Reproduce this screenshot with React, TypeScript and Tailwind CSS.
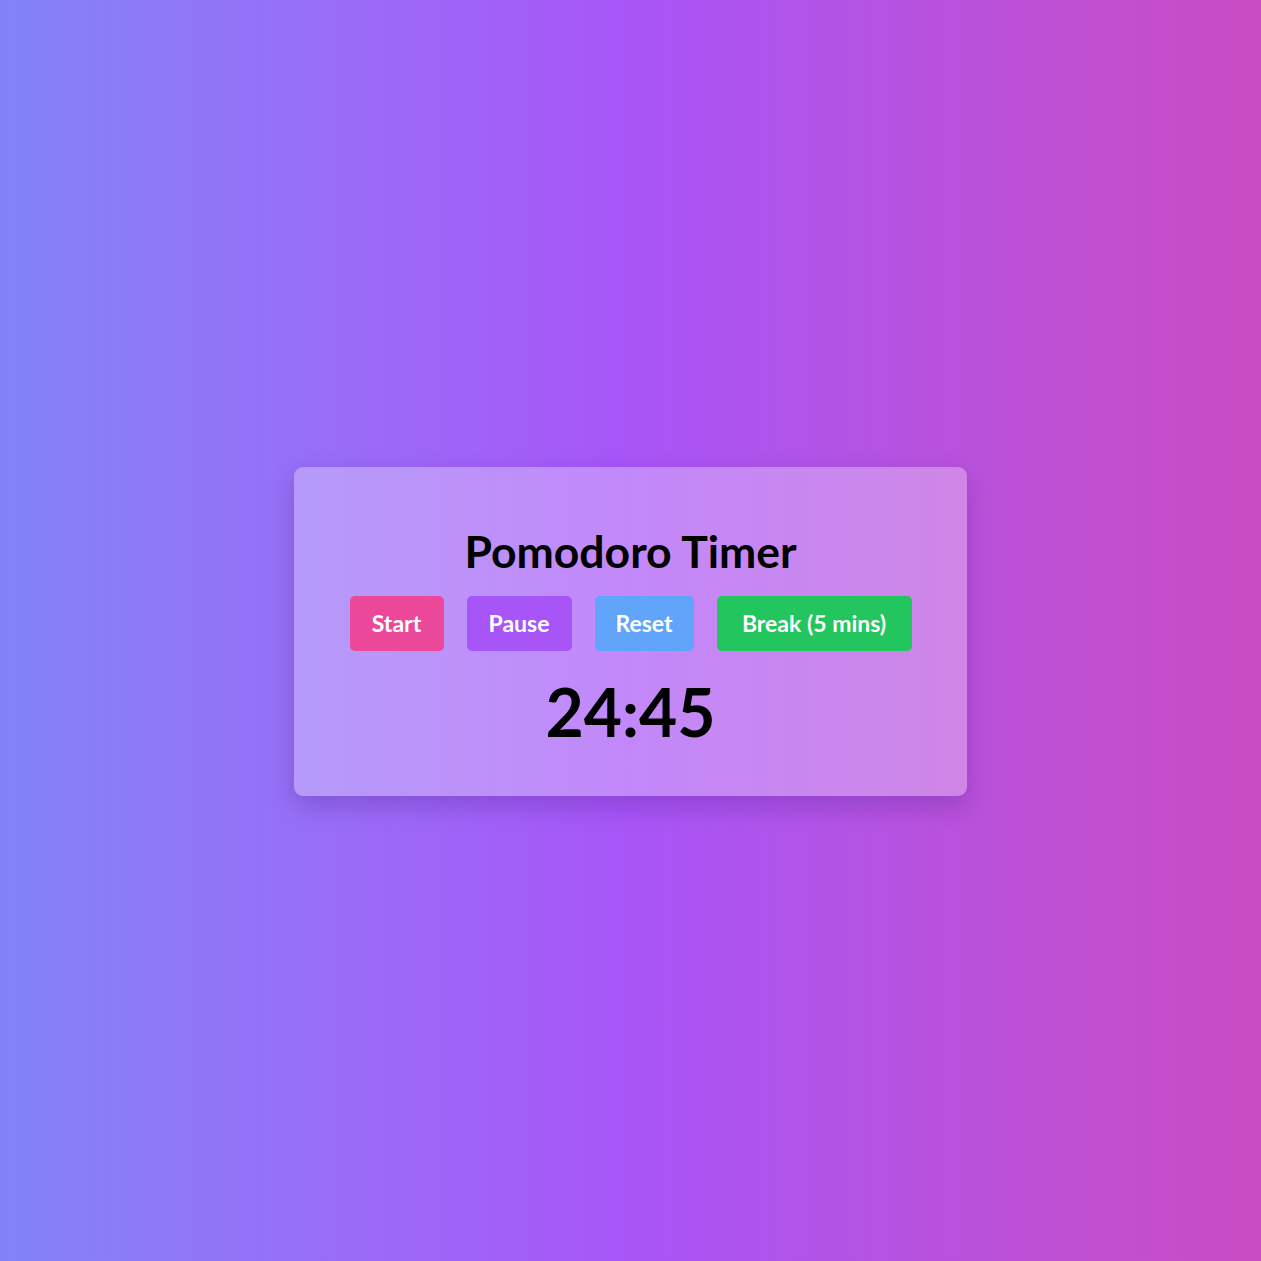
const buttons = [
  { label: "Start", cls: "bg-[#ec4899] w-[94px]" },
  { label: "Pause", cls: "bg-[#a855f7] w-[105px]" },
  { label: "Reset", cls: "bg-[#60a5fa] w-[99px]" },
  { label: "Break (5 mins)", cls: "bg-[#22c55e] w-[195px]" },
];

export default function App() {
  return (
    <div className="min-h-screen w-full flex items-center justify-center bg-gradient-to-r from-[#8283f7] via-[#a855f7] to-[#c94bc3] font-['Lato','Noto_Sans',sans-serif]">
      <div className="mt-[2px] w-[673px] rounded-[9px] bg-white/30 shadow-[0_10px_25px_rgba(60,20,120,0.25)] pt-[58px] pb-[44px] flex flex-col items-center">
        <h1 className="h-[52px] flex items-center text-[44.5px] font-bold text-black leading-none">
          Pomodoro Timer
        </h1>
        <div className="mt-[19px] flex gap-[23px]">
          {buttons.map((b) => (
            <button
              key={b.label}
              className={`h-[55px] rounded-[5px] text-white text-[23px] font-bold flex items-center justify-center ${b.cls}`}
            >
              {b.label}
            </button>
          ))}
        </div>
        <div className="mt-[21px] h-[80px] flex items-center text-[66px] font-bold text-black leading-none">
          24:45
        </div>
      </div>
    </div>
  );
}
